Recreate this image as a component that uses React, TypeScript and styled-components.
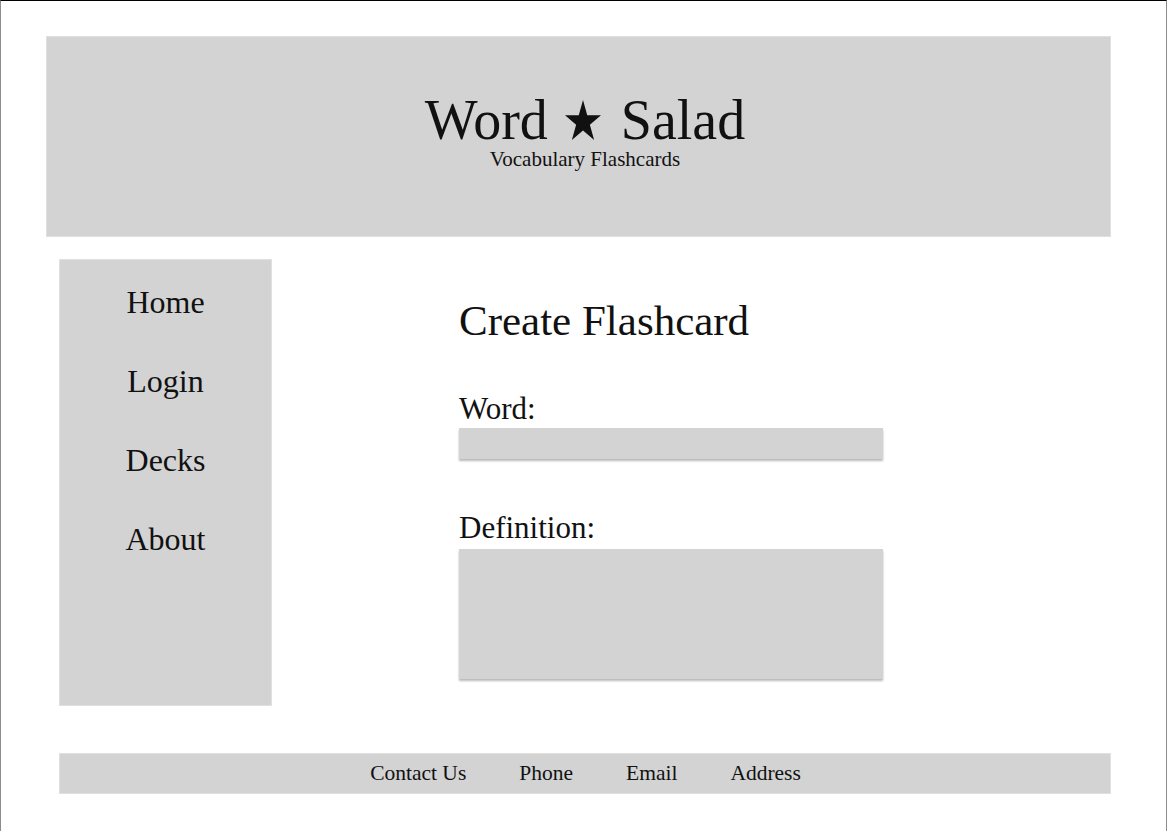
import React from "react";
import styled, { createGlobalStyle } from "styled-components";

const GlobalStyle = createGlobalStyle`
  html, body {
    margin: 0;
    padding: 0;
    background: #ffffff;
  }
  body {
    font-family: "Liberation Serif", "Times New Roman", serif;
    color: #111111;
  }
`;

const Frame = styled.div`
  box-sizing: border-box;
  width: 1167px;
  min-height: 831px;
  border-top: 1px solid #000000;
  border-left: 1px solid #8c8c8c;
  border-right: 1px solid #8c8c8c;
  display: flex;
  flex-direction: column;
`;

const Header = styled.header`
  box-sizing: border-box;
  margin: 35px 0 0 45px;
  width: 1065px;
  height: 201px;
  background: #d3d3d3;
  border: 1px solid #e0e0e0;
  display: flex;
  flex-direction: column;
  align-items: center;
  padding-top: 55px;
  padding-left: 13px;
`;

const Title = styled.h1`
  margin: 0;
  font-weight: normal;
  font-size: 56px;
  line-height: 56px;
  color: #111111;
  white-space: nowrap;
`;

const Star = styled.svg`
  display: inline-block;
  width: 36px;
  height: 40px;
  margin: 0 20px 0 17px;
  vertical-align: -1px;
`;

const Subtitle = styled.div`
  font-size: 21px;
  line-height: 21px;
  margin-top: 1px;
  color: #111111;
`;

const Middle = styled.div`
  display: flex;
  margin: 22px 0 0 58px;
`;

const Sidebar = styled.nav`
  box-sizing: border-box;
  width: 213px;
  height: 447px;
  background: #d3d3d3;
  border: 1px solid #e0e0e0;
  display: flex;
  flex-direction: column;
  align-items: center;
  gap: 47px;
  padding-top: 26px;
`;

const NavItem = styled.a`
  font-size: 32px;
  line-height: 32px;
  color: #111111;
  text-decoration: none;
`;

const Content = styled.main`
  margin-left: 187px;
  padding-top: 40px;
  display: flex;
  flex-direction: column;
  width: 424px;
`;

const Heading = styled.h2`
  margin: 0;
  font-weight: normal;
  font-size: 43px;
  line-height: 43px;
  color: #111111;
`;

const Label = styled.label<{ $top: number }>`
  display: block;
  font-size: 31px;
  line-height: 31px;
  margin-top: ${(p) => p.$top}px;
  color: #111111;
`;

const Field = styled.div<{ $height: number; $gap: number }>`
  margin-top: ${(p) => p.$gap}px;
  width: 424px;
  height: ${(p) => p.$height}px;
  background: #d3d3d3;
  box-shadow: 0 2px 2px rgba(0, 0, 0, 0.28);
`;

const Footer = styled.footer`
  box-sizing: border-box;
  margin: 47px 0 0 58px;
  width: 1052px;
  height: 41px;
  background: #d3d3d3;
  border: 1px solid #e0e0e0;
  display: flex;
  justify-content: center;
  align-items: center;
  gap: 53px;
  padding-left: 1px;
`;

const FooterItem = styled.span`
  font-size: 21.5px;
  line-height: 21px;
  color: #111111;
`;

export default function App() {
  return (
    <>
      <GlobalStyle />
      <Frame>
        <Header>
          <Title>
            Word
            <Star viewBox="-0.951 -1 1.902 1.809" preserveAspectRatio="none" aria-hidden="true">
              <polygon
                fill="#111111"
                points="0,-1 0.2245,-0.309 0.951,-0.309 0.363,0.118 0.588,0.809 0,0.382 -0.588,0.809 -0.363,0.118 -0.951,-0.309 -0.2245,-0.309"
              />
            </Star>
            Salad
          </Title>
          <Subtitle>Vocabulary Flashcards</Subtitle>
        </Header>
        <Middle>
          <Sidebar>
            <NavItem>Home</NavItem>
            <NavItem>Login</NavItem>
            <NavItem>Decks</NavItem>
            <NavItem>About</NavItem>
          </Sidebar>
          <Content>
            <Heading>Create Flashcard</Heading>
            <Label $top={51}>Word:</Label>
            <Field $height={31} $gap={4} />
            <Label $top={53}>Definition:</Label>
            <Field $height={130} $gap={6} />
          </Content>
        </Middle>
        <Footer>
          <FooterItem>Contact Us</FooterItem>
          <FooterItem>Phone</FooterItem>
          <FooterItem>Email</FooterItem>
          <FooterItem>Address</FooterItem>
        </Footer>
      </Frame>
    </>
  );
}
